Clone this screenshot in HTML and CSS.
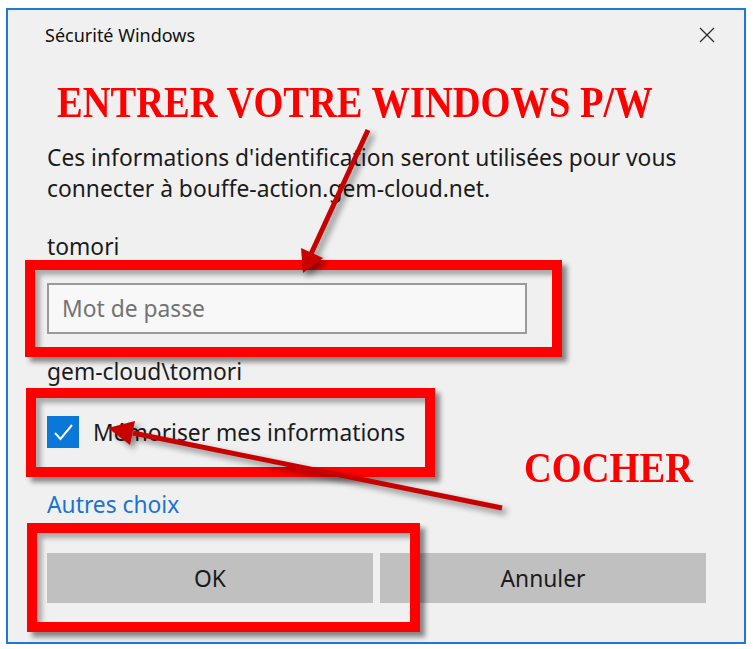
FILE: index.html
```html
<!DOCTYPE html>
<html lang="fr">
<head>
    <meta charset="UTF-8">
    <title>Sécurité Windows</title>
    <link rel="stylesheet" href="styles.css">
</head>
<body>
    <div class="screen">
        <!-- boîte de dialogue -->
        <div class="window">
            <div class="titlebar">
                <span class="title">Sécurité Windows</span>
                <svg class="close" width="16" height="16" viewBox="0 0 16 16">
                    <path d="M1 1 L15 15 M15 1 L1 15" stroke="#2b2b2b" stroke-width="1.3" fill="none"/>
                </svg>
            </div>
            <div class="content">
                <p class="message">Ces informations d'identification seront utilisées pour vous<br>connecter à bouffe-action.gem-cloud.net.</p>
                <div class="user">tomori</div>
                <div class="password"><span class="placeholder">Mot de passe</span></div>
                <div class="domain">gem-cloud\tomori</div>
                <div class="remember">
                    <span class="checkbox">
                        <svg width="32" height="32" viewBox="0 0 32 32">
                            <path d="M8 17 L13.5 23 L25 9" stroke="#fff" stroke-width="2" fill="none"/>
                        </svg>
                    </span>
                    <span>Mémoriser mes informations</span>
                </div>
                <a class="more" href="#">Autres choix</a>
                <div class="buttons">
                    <button class="btn">OK</button>
                    <button class="btn">Annuler</button>
                </div>
            </div>
        </div>

        <!-- annotations -->
        <div class="note note-top">ENTRER VOTRE WINDOWS P/W</div>
        <div class="note note-check">COCHER</div>
        <div class="mark mark-password"></div>
        <div class="mark mark-remember"></div>
        <div class="mark mark-ok"></div>
        <svg class="arrows" width="753" height="649" viewBox="0 0 753 649">
            <g fill="#c80000" stroke="#c80000">
                <line x1="368" y1="130" x2="311" y2="254" stroke-width="5"/>
                <polygon points="303,273 323,258 301,248" stroke="none"/>
                <line x1="502" y1="508" x2="133" y2="433" stroke-width="5"/>
                <polygon points="108,428 135,421 130,445" stroke="none"/>
            </g>
        </svg>
    </div>
</body>
</html>
```

FILE: styles.css
```css
body {
    margin: 0;
    background: #ffffff;
    font-family: 'Noto Sans', 'Open Sans', sans-serif;
    color: #1b1b1b;
}

.screen {
    position: relative;
    width: 753px;
    height: 649px;
    padding: 8px 0 0 6px;
    box-sizing: border-box;
    overflow: hidden;
}

.window {
    width: 740px;
    height: 636px;
    box-sizing: border-box;
    border: 2px solid #1b7ad8;
    background: #f0f0f0;
}

.titlebar {
    height: 50px;
    display: flex;
    align-items: center;
    justify-content: space-between;
    padding: 0 29px 0 37px;
}

.title {
    font-size: 18px;
    color: #111;
}

.content {
    padding: 0 38px 0 39px;
}

.message {
    margin: 82px 0 0;
    font-size: 22.8px;
    line-height: 31px;
}

.user,
.domain {
    font-size: 22.8px;
    line-height: 30px;
}

.user {
    margin-top: 28px;
}

.password {
    margin-top: 21px;
    width: 480px;
    height: 51px;
    box-sizing: border-box;
    border: 2px solid #9a9a9a;
    background: #f8f8f8;
    display: flex;
    align-items: center;
    padding-left: 13px;
}

.placeholder {
    font-size: 22.8px;
    color: #737373;
}

.domain {
    margin-top: 23px;
}

.remember {
    margin-top: 29px;
    height: 32px;
    display: flex;
    align-items: center;
    gap: 14px;
    font-size: 22.8px;
}

.checkbox {
    width: 32px;
    height: 32px;
    background: #0a78d8;
    display: block;
}

.checkbox svg {
    display: block;
}

.more {
    display: block;
    margin-top: 42px;
    font-size: 22.8px;
    line-height: 30px;
    color: #1a73d2;
    text-decoration: none;
    width: max-content;
}

.buttons {
    margin-top: 33px;
    display: grid;
    grid-template-columns: 1fr 1fr;
    gap: 7px;
}

.btn {
    height: 50px;
    border: none;
    background: #c0c0c0;
    font-family: inherit;
    font-size: 22.8px;
    color: #1b1b1b;
}

/* annotations rouges */
.note {
    position: absolute;
    font-family: 'Liberation Serif', serif;
    font-weight: bold;
    color: #ff0000;
    font-size: 38.5px;
    line-height: 1;
    transform-origin: left top;
    white-space: nowrap;
}

.note-top {
    left: 57px;
    top: 80px;
    transform: scaleY(1.16);
}

.note-check {
    left: 524px;
    top: 447px;
    transform: scaleY(1.1);
}

.mark {
    position: absolute;
    box-sizing: border-box;
    border: 10px solid #ff0000;
    box-shadow: 5px 5px 5px rgba(0,0,0,0.45), inset 5px 5px 5px rgba(0,0,0,0.3);
}

.mark-password {
    left: 25px;
    top: 260px;
    width: 537px;
    height: 97px;
}

.mark-remember {
    left: 26px;
    top: 388px;
    width: 409px;
    height: 89px;
}

.mark-ok {
    left: 27px;
    top: 523px;
    width: 393px;
    height: 109px;
}

.arrows {
    position: absolute;
    left: 0;
    top: 0;
    filter: drop-shadow(4px 4px 3px rgba(0,0,0,0.45));
}
```
